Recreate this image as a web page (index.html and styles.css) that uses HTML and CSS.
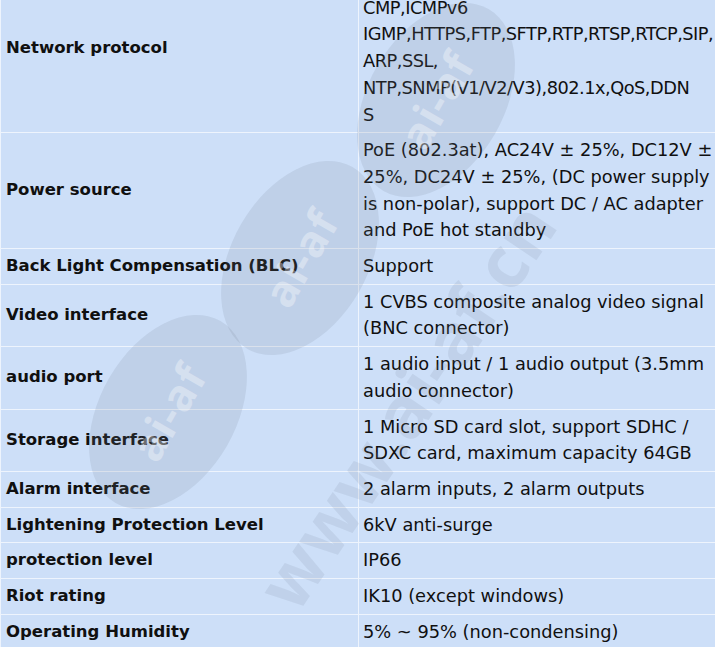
FILE: index.html
```html
<!DOCTYPE html>
<html lang="en">
<head>
<meta charset="utf-8">
<title>Specifications</title>
<link rel="stylesheet" href="styles.css">
</head>
<body>
<div class="page">
<table class="spec">
<colgroup><col class="c-label"><col class="c-value"></colgroup>
<tbody>
<tr><th>Network protocol</th><td class="protocols">IPv4,IPv6,HTTP,TCP,UDP,DHCP,DNS,I<br>CMP,ICMPv6<br>IGMP,HTTPS,FTP,SFTP,RTP,RTSP,RTCP,SIP,<br>ARP,SSL,<br>NTP,SNMP(V1/V2/V3),802.1x,QoS,DDN<br>S</td></tr>
<tr><th>Power source</th><td>PoE (802.3at), AC24V ± 25%, DC12V ± 25%, DC24V ± 25%, (DC power supply is non-polar), support DC / AC adapter and PoE hot standby</td></tr>
<tr><th>Back Light Compensation (BLC)</th><td>Support</td></tr>
<tr><th>Video interface</th><td>1 CVBS composite analog video signal (BNC connector)</td></tr>
<tr><th>audio port</th><td>1 audio input / 1 audio output (3.5mm audio connector)</td></tr>
<tr><th>Storage interface</th><td>1 Micro SD card slot, support SDHC / SDXC card, maximum capacity 64GB</td></tr>
<tr><th>Alarm interface</th><td>2 alarm inputs, 2 alarm outputs</td></tr>
<tr><th>Lightening Protection Level</th><td>6kV anti-surge</td></tr>
<tr><th>protection level</th><td>IP66</td></tr>
<tr><th>Riot rating</th><td>IK10 (except windows)</td></tr>
<tr><th>Operating Humidity</th><td>5% ~ 95% (non-condensing)</td></tr>
</tbody>
</table>
<div class="watermark" aria-hidden="true">
  <div class="blob blob-1"><span>ai-af</span></div>
  <div class="blob blob-2"><span>ai-af</span></div>
  <div class="blob blob-3"><span>ai-af</span></div>
  <div class="wm-url">www.ai-af.cn</div>
</div>
</div>
</body>
</html>
```
FILE: styles.css
```css
html, body {
  margin: 0;
  padding: 0;
  background: #cddff8;
  overflow: hidden;
}
.page {
  position: relative;
  width: 715px;
  height: 647px;
  overflow: hidden;
  background: #cddff8;
}
.spec {
  margin-top: -37px;
  width: 726px;
  border-collapse: collapse;
  table-layout: fixed;
  font-family: "DejaVu Sans", "Open Sans", sans-serif;
  font-size: 17.8px;
  line-height: 26.7px;
  color: #101010;
}
.c-label { width: 358px; }
.spec th, .spec td {
  border: 1px solid #eef4fd;
  padding: 4px 5px 4px 5px;
  vertical-align: middle;
  text-align: left;
}
.spec th {
  font-weight: 700;
  font-size: 16.5px;
}
.spec td {
  padding-left: 4px;
}
.spec td.protocols {
  letter-spacing: -0.5px;
  white-space: nowrap;
}
.watermark {
  position: absolute;
  inset: 0;
  pointer-events: none;
}
.blob {
  position: absolute;
  width: 210px;
  height: 136px;
  margin-left: -105px;
  margin-top: -68px;
  border-radius: 50%;
  background: rgba(120, 132, 152, 0.16);
  transform: rotate(-60deg);
  display: flex;
  align-items: center;
  justify-content: center;
}
.blob span {
  font-family: "Open Sans", sans-serif;
  font-weight: 700;
  font-size: 44px;
  color: rgba(255, 255, 255, 0.35);
  letter-spacing: 1px;
}
.blob-1 { left: 300px; top: 258px; }
.blob-2 { left: 168px; top: 412px; }
.blob-3 { left: 436px; top: 100px; }
.wm-url {
  position: absolute;
  left: 405px;
  top: 405px;
  transform: translate(-50%, -50%) rotate(-56deg);
  font-family: "Open Sans", sans-serif;
  font-weight: 700;
  font-size: 72px;
  white-space: nowrap;
  color: rgba(120, 132, 152, 0.15);
}
```
